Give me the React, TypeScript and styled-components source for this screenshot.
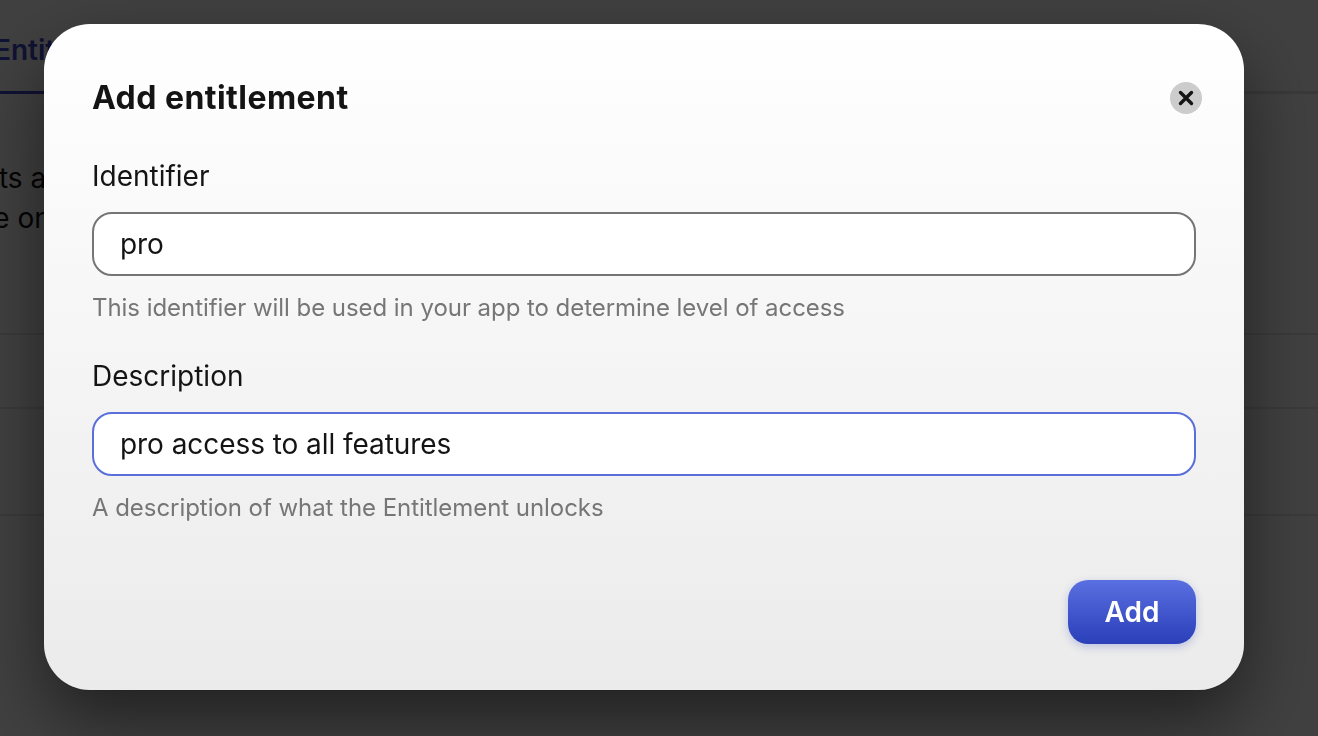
import { createGlobalStyle } from "styled-components";
import styled from "styled-components";

const GlobalStyle = createGlobalStyle`
    html, body {
        margin: 0;
        padding: 0;
        height: 100%;
        overflow: hidden;
        font-family: "Inter", "Liberation Sans", sans-serif;
    }
`;

const Page = styled.div`
    width: 1318px;
    height: 736px;
    background: #fff;
    overflow: hidden;
`;

const Tabs = styled.div`
    height: 91px;
    display: flex;
    align-items: flex-end;
    border-bottom: 3px solid #e0e0e0;
`;

const Tab = styled.div`
    margin-left: -6px;
    padding: 0 60px 24px 0;
    font-size: 28px;
    font-weight: 600;
    color: #3f48cc;
    border-bottom: 3px solid #3f48cc;
    margin-bottom: -3px;
`;

const Intro = styled.p`
    margin: 64px 0 0 -140px;
    font-size: 28px;
    line-height: 40px;
    color: #111;
    width: 500px;
`;

const Row = styled.div<{ $height: number }>`
    height: ${(p) => p.$height}px;
    border-bottom: 2px solid #e6e6e6;
`;

const Rows = styled.div`
    margin-top: 95px;
    border-top: 2px solid #e6e6e6;
`;

const Overlay = styled.div`
    position: fixed;
    inset: 0;
    padding: 24px 74px 46px 44px;
    box-sizing: border-box;
    background: rgba(0, 0, 0, 0.75);
`;

const Modal = styled.form`
    width: 1200px;
    height: 666px;
    box-sizing: border-box;
    padding: 48px 48px 46px;
    border-radius: 46px;
    background: linear-gradient(180deg, #ffffff 0%, #ebebeb 100%);
    box-shadow: 0 30px 70px rgba(0, 0, 0, 0.5), 0 1px 0 #3c3c3c;
    display: flex;
    flex-direction: column;
`;

const Header = styled.div`
    display: flex;
    align-items: center;
    justify-content: space-between;
    height: 52px;
    margin-right: -6px;
`;

const Title = styled.h2`
    margin: -2px 0 0;
    font-size: 32px;
    font-weight: 700;
    letter-spacing: 0.45px;
    color: #141414;
`;

const CloseButton = styled.button`
    width: 32px;
    height: 32px;
    padding: 0;
    border: none;
    border-radius: 50%;
    background: #cccccc;
    display: flex;
    align-items: center;
    justify-content: center;
`;

const Field = styled.div`
    display: flex;
    flex-direction: column;
    margin-top: 32px;
    & + & {
        margin-top: 30px;
    }
`;

const Label = styled.label`
    font-size: 28px;
    line-height: 40px;
    color: #141414;
    margin-bottom: 16px;
`;

const Input = styled.input<{ $focused?: boolean }>`
    height: 64px;
    box-sizing: border-box;
    padding: 0 26px;
    border: 2px solid ${(p) => (p.$focused ? "#5a6fdc" : "#757575")};
    border-radius: 20px;
    background: #fff;
    font-family: inherit;
    font-size: 28px;
    letter-spacing: -0.06px;
    color: #141414;
    outline: none;
`;

const Hint = styled.div`
    margin-top: 14px;
    font-size: 24px;
    line-height: 36px;
    letter-spacing: -0.05px;
    color: #767676;
`;

const Footer = styled.div`
    margin-top: auto;
    display: flex;
    justify-content: flex-end;
`;

const AddButton = styled.button`
    width: 128px;
    height: 64px;
    border: none;
    border-radius: 20px;
    background: linear-gradient(180deg, #5a6fe0 0%, #2a3fb9 100%);
    box-shadow: 0 3px 8px rgba(42, 63, 185, 0.25);
    color: #fff;
    font-family: inherit;
    font-size: 28px;
    font-weight: 600;
`;

const App = () => {
    return (
        <>
            <GlobalStyle />
            <Page>
                <Tabs>
                    <Tab>Entitlements</Tab>
                </Tabs>
                <Intro>
                    Entitlements are
                    <br />
                    Use can be on
                </Intro>
                <Rows>
                    <Row $height={72} />
                    <Row $height={105} />
                </Rows>
            </Page>
            <Overlay>
                <Modal>
                    <Header>
                        <Title>Add entitlement</Title>
                        <CloseButton type="button" aria-label="Close">
                            <svg width="16" height="16" viewBox="0 0 16 16">
                                <path
                                    d="M2.5 2.5 L13.5 13.5 M13.5 2.5 L2.5 13.5"
                                    stroke="#141414"
                                    strokeWidth="3.4"
                                    strokeLinecap="round"
                                />
                            </svg>
                        </CloseButton>
                    </Header>
                    <Field>
                        <Label>Identifier</Label>
                        <Input defaultValue="pro" />
                        <Hint>This identifier will be used in your app to determine level of access</Hint>
                    </Field>
                    <Field>
                        <Label>Description</Label>
                        <Input $focused defaultValue="pro access to all features" />
                        <Hint>A description of what the Entitlement unlocks</Hint>
                    </Field>
                    <Footer>
                        <AddButton type="button">Add</AddButton>
                    </Footer>
                </Modal>
            </Overlay>
        </>
    );
};

export default App;
